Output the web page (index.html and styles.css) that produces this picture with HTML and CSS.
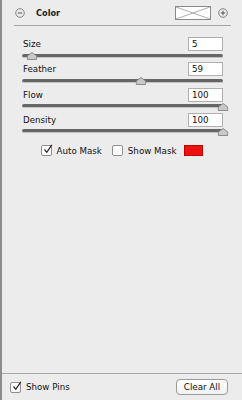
FILE: index.html
```html
<!DOCTYPE html>
<html lang="en">
  <head>
    <meta charset="UTF-8" />
    <title>Color brush</title>
    <link rel="stylesheet" href="styles.css">
  </head>
  <body>
    <div class="panel">
      <div class="head">
        <svg class="toggle" viewBox="0 0 10 10" width="10" height="10">
          <circle cx="5" cy="5" r="4.3" fill="none" stroke="#777" stroke-width="0.9" />
          <line x1="2.8" y1="5" x2="7.2" y2="5" stroke="#555" stroke-width="1" />
        </svg>
        <span class="title">Color</span>
        <span class="swatch">
          <svg viewBox="0 0 34 12" width="34" height="12" preserveAspectRatio="none">
            <line x1="0" y1="0" x2="34" y2="12" stroke="#999" stroke-width="0.8" />
            <line x1="0" y1="12" x2="34" y2="0" stroke="#999" stroke-width="0.8" />
          </svg>
        </span>
        <svg class="toggle plus" viewBox="0 0 10 10" width="10" height="10">
          <circle cx="5" cy="5" r="4.3" fill="none" stroke="#777" stroke-width="0.9" />
          <line x1="2.8" y1="5" x2="7.2" y2="5" stroke="#555" stroke-width="1" />
          <line x1="5" y1="2.8" x2="5" y2="7.2" stroke="#555" stroke-width="1" />
        </svg>
      </div>
      <div class="rule"></div>

      <div class="controls">
        <div class="field">
          <div class="field-row"><label>Size</label><span class="num">5</span></div>
          <div class="slider">
            <div class="track"></div>
            <svg class="thumb" style="left: 5%" viewBox="0 0 11 8" width="11" height="8">
              <path d="M5.5 0.5 L10.3 4 L10.3 7.5 L0.7 7.5 L0.7 4 Z" fill="#c9c9c9" stroke="#777" stroke-width="0.8" stroke-linejoin="round" />
            </svg>
          </div>
        </div>
        <div class="field">
          <div class="field-row"><label>Feather</label><span class="num">59</span></div>
          <div class="slider">
            <div class="track"></div>
            <svg class="thumb" style="left: 59%" viewBox="0 0 11 8" width="11" height="8">
              <path d="M5.5 0.5 L10.3 4 L10.3 7.5 L0.7 7.5 L0.7 4 Z" fill="#c9c9c9" stroke="#777" stroke-width="0.8" stroke-linejoin="round" />
            </svg>
          </div>
        </div>
        <div class="field">
          <div class="field-row"><label>Flow</label><span class="num">100</span></div>
          <div class="slider">
            <div class="track"></div>
            <svg class="thumb" style="left: 100%" viewBox="0 0 11 8" width="11" height="8">
              <path d="M5.5 0.5 L10.3 4 L10.3 7.5 L0.7 7.5 L0.7 4 Z" fill="#c9c9c9" stroke="#777" stroke-width="0.8" stroke-linejoin="round" />
            </svg>
          </div>
        </div>
        <div class="field">
          <div class="field-row"><label>Density</label><span class="num">100</span></div>
          <div class="slider">
            <div class="track"></div>
            <svg class="thumb" style="left: 100%" viewBox="0 0 11 8" width="11" height="8">
              <path d="M5.5 0.5 L10.3 4 L10.3 7.5 L0.7 7.5 L0.7 4 Z" fill="#c9c9c9" stroke="#777" stroke-width="0.8" stroke-linejoin="round" />
            </svg>
          </div>
        </div>

        <div class="masks">
          <span class="check">
            <span class="box">
              <svg viewBox="0 0 11 11" width="11" height="11">
                <path d="M2.5 5.5 L4.8 8.3 L9.8 0.8" fill="none" stroke="#222" stroke-width="1.2" />
              </svg>
            </span>
            Auto Mask
          </span>
          <span class="check"><span class="box"></span>Show Mask</span>
          <span class="red"></span>
        </div>
      </div>

      <div class="foot">
        <span class="check">
          <span class="box">
            <svg viewBox="0 0 11 11" width="11" height="11">
              <path d="M2.5 5.5 L4.8 8.3 L9.8 0.8" fill="none" stroke="#222" stroke-width="1.2" />
            </svg>
          </span>
          Show Pins
        </span>
        <button class="clear">Clear All</button>
      </div>
    </div>
  </body>
</html>
```

FILE: styles.css
```css
html,
body {
  margin: 0;
  background: #ececec;
}
body {
  font-family: "DejaVu Sans", sans-serif;
  font-size: 8.7px;
  color: #111;
}
.panel {
  width: 242px;
  height: 400px;
  box-sizing: border-box;
  border-left: 2px solid #8c8c8c;
  display: flex;
  flex-direction: column;
}
.head {
  height: 25px;
  display: flex;
  align-items: center;
  padding: 0 14px 0 13px;
}
.toggle {
  display: block;
}
.title {
  margin-left: 11px;
  font-weight: bold;
  font-size: 8.2px;
  color: #222;
}
.swatch {
  margin-left: auto;
  margin-right: 7px;
  width: 34px;
  height: 12px;
  background: #fff;
  border: 1px solid #8a8a8a;
}
.swatch svg {
  display: block;
}
.rule {
  height: 1px;
  background: #a6a6a6;
  margin: 0 11px 0 12px;
}
.controls {
  padding: 11px 19px 0;
}
.field-row {
  height: 14px;
  display: flex;
  align-items: center;
  justify-content: space-between;
}
.field-row label {
  padding-left: 2px;
}
.num {
  width: 33px;
  height: 12px;
  line-height: 12px;
  background: #fff;
  border: 1px solid #b0b0b0;
  text-indent: 3px;
}
.slider {
  position: relative;
  height: 11.33px;
  margin: 0 0 0 1px;
}
.track {
  position: absolute;
  left: 0;
  right: 0;
  top: 2.5px;
  height: 4px;
  border-radius: 2px;
  background: #666;
  border-bottom: 1px solid #c4c4c4;
  box-sizing: border-box;
}
.thumb {
  position: absolute;
  top: 1px;
  transform: translateX(-50%);
}
.masks {
  margin-top: 6.5px;
  height: 12px;
  display: flex;
  align-items: center;
  justify-content: center;
}
.check {
  display: flex;
  align-items: center;
}
.box {
  width: 9px;
  height: 9px;
  border: 1px solid #8e8e8e;
  border-radius: 2px;
  background: #fff;
  margin-right: 5px;
  position: relative;
}
.box svg {
  position: absolute;
  left: 0;
  top: -2px;
}
.masks .check + .check {
  margin-left: 10px;
}
.red {
  width: 17px;
  height: 9px;
  margin-left: 8px;
  background: #ee1111;
  border: 1px solid #b00;
}
.foot {
  margin-top: auto;
  height: 26px;
  border-top: 1px solid #a8a8a8;
  display: flex;
  align-items: center;
  justify-content: space-between;
  padding: 0 14px 0 8px;
}
.clear {
  font-family: "DejaVu Sans", sans-serif;
  font-size: 8.7px;
  color: #111;
  width: 52px;
  height: 16px;
  padding: 0;
  background: linear-gradient(#fff, #f1f1f1);
  border: 1px solid #9a9a9a;
  border-radius: 4px;
}
```
